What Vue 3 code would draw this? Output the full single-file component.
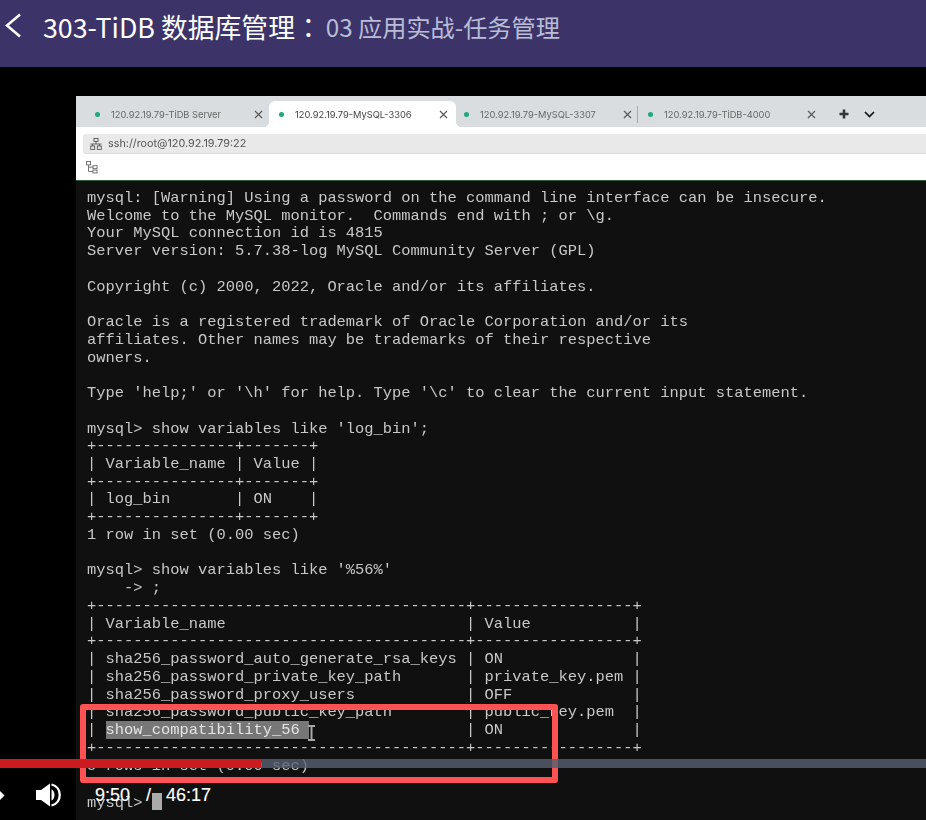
<script setup>
const tabs = [
  { label: '120.92.19.79-TiDB Server', cls: 't1' },
  { label: '120.92.19.79-MySQL-3306', cls: 't2 active' },
  { label: '120.92.19.79-MySQL-3307', cls: 't3' },
  { label: '120.92.19.79-TiDB-4000', cls: 't4' }
]
const before = `mysql: [Warning] Using a password on the command line interface can be insecure.
Welcome to the MySQL monitor.  Commands end with ; or \\g.
Your MySQL connection id is 4815
Server version: 5.7.38-log MySQL Community Server (GPL)

Copyright (c) 2000, 2022, Oracle and/or its affiliates.

Oracle is a registered trademark of Oracle Corporation and/or its
affiliates. Other names may be trademarks of their respective
owners.

Type 'help;' or '\\h' for help. Type '\\c' to clear the current input statement.

mysql> show variables like 'log_bin';
+---------------+-------+
| Variable_name | Value |
+---------------+-------+
| log_bin       | ON    |
+---------------+-------+
1 row in set (0.00 sec)

mysql> show variables like '%56%'
    -> ;
+----------------------------------------+-----------------+
| Variable_name                          | Value           |
+----------------------------------------+-----------------+
| sha256_password_auto_generate_rsa_keys | ON              |
| sha256_password_private_key_path       | private_key.pem |
| sha256_password_proxy_users            | OFF             |
| sha256_password_public_key_path        | public_key.pem  |
| `
const after = `                 | ON              |
+----------------------------------------+-----------------+
5 rows in set (0.00 sec)

mysql> `
</script>

<template>
  <div class="page">
    <header class="topbar">
      <svg class="back" width="20" height="28" viewBox="0 0 20 28">
        <path d="M17 2.5 L4 13.5 L17 24.5" fill="none" stroke="#fff" stroke-width="2.5" />
      </svg>
      <span class="title">303-TiDB 数据库管理<span class="colon">：</span></span>
      <span class="subtitle">03 应用实战-任务管理</span>
    </header>

    <main class="stage">
      <section class="screen">
        <nav class="tabs">
          <div v-for="t in tabs" :key="t.label" class="tab" :class="t.cls">
            <i class="dot"></i>
            <span class="tab-label">{{ t.label }}</span>
            <svg class="close" width="9" height="9" viewBox="0 0 9 9">
              <path d="M1 1 L8 8 M8 1 L1 8" stroke="#555" stroke-width="1.1" />
            </svg>
          </div>
          <div class="tab-actions">
            <svg width="10" height="10" viewBox="0 0 10 10"><path d="M5 .5 V9.5 M.5 5 H9.5" stroke="#333" stroke-width="2.6" /></svg>
            <svg width="11" height="7" viewBox="0 0 11 7"><path d="M1 1 L5.5 5.5 L10 1" fill="none" stroke="#111" stroke-width="1.7" /></svg>
          </div>
        </nav>
        <div class="address-wrap">
          <div class="address">
            <svg width="12" height="12" viewBox="0 0 12 12" fill="none" stroke="#555" stroke-width=".9">
              <rect x="4" y=".5" width="4" height="3" /><path d="M6 3.5 V6 M.5 6 H11.5 M2.5 6 V8 M9.5 6 V8" />
              <rect x=".7" y="8" width="4" height="3.4" /><rect x="7.3" y="8" width="4" height="3.4" />
            </svg>
            <span>ssh://root@120.92.19.79:22</span>
          </div>
        </div>
        <div class="tool">
          <svg width="12" height="13" viewBox="0 0 12 13" fill="none" stroke="#666" stroke-width=".9">
            <rect x=".5" y=".5" width="4" height="3.4" /><rect x="7" y="4.7" width="4" height="3" /><rect x="7" y="9" width="4" height="3" />
            <path d="M2.5 4 V10.5 H7 M2.5 6.2 H7" />
          </svg>
        </div>
        <pre class="term">{{ before }}<mark class="sel">show_compatibility_56 </mark><span class="caret"><svg width="9" height="16" viewBox="0 0 9 16"><path d="M1 1 H8 M1 15 H8 M4.5 1 V15" fill="none" stroke="#a8a8a8" stroke-width="2" /></svg></span>{{ after }}<i class="cursor"></i></pre>
      </section>

      <div class="highlight"></div>

      <div class="progress">
        <div class="played"></div>
      </div>

      <div class="controls">
        <svg class="play" width="5" height="9" viewBox="0 0 5 9"><path d="M0 0 L4.5 4.5 L0 9 Z" fill="#fff" /></svg>
        <svg class="volume" width="26" height="24" viewBox="0 0 26 24">
          <path d="M0 7 H5 L14 0.5 V23.5 L5 17 H0 Z" fill="#fff" />
          <path d="M15.5 6.5 C19.5 8 19.5 16 15.5 17.5 Z" fill="#fff" />
          <path d="M15.5 1.5 C26.5 4 26.5 20 15.5 22.5" fill="none" stroke="#fff" stroke-width="2.3" />
        </svg>
        <span class="time">9:50</span>
        <span class="sep">/</span>
        <span class="time total">46:17</span>
      </div>
    </main>
  </div>
</template>

<style>
html, body { margin: 0; background: #000; }
</style>

<style scoped>
.page {
  width: 926px;
  height: 820px;
  overflow: hidden;
  background: #000;
  display: flex;
  flex-direction: column;
}
.topbar {
  height: 67px;
  flex: none;
  box-sizing: border-box;
  background: #3c3469;
  display: flex;
  align-items: flex-start;
  padding: 12px 0 0 3px;
  font-family: "Noto Sans CJK SC", "Noto Sans", sans-serif;
}
.back { flex: none; margin-right: 20px; }
.title { color: #fff; font-size: 26.8px; line-height: 30px; white-space: nowrap; }
.colon { font-family: "Noto Sans CJK TC", sans-serif; }
.subtitle { color: #b9bdd6; font-size: 24.2px; line-height: 30px; margin-left: 4px; white-space: nowrap; }
.stage {
  flex: 1;
  position: relative;
  padding: 29px 0 0 76px;
}
.screen {
  width: 850px;
  height: 724px;
  background: #101010;
  display: flex;
  flex-direction: column;
  overflow: hidden;
  filter: blur(.3px);
}
.tabs {
  height: 31px;
  flex: none;
  background: #d9dde0;
  display: flex;
  align-items: stretch;
  padding: 5px 0 0 9px;
  box-sizing: border-box;
}
.tab {
  width: 184px;
  box-sizing: border-box;
  display: flex;
  align-items: center;
  padding: 1px 6.5px 0 10px;
  color: #666;
  font: 9.3px/1 "Inter", "Liberation Sans", sans-serif;
  position: relative;
}
.tab.t2 { width: 187px; padding-right: 8.5px; }
.tab.t3 { width: 182px; padding-left: 8px; }
.tab.active {
  background: #fff;
  border-radius: 6px 6px 0 0;
  color: #444;
}
.tab.active::before,
.tab.active::after {
  content: "";
  position: absolute;
  bottom: 0;
  width: 6px;
  height: 6px;
}
.tab.active::before {
  left: -6px;
  background: radial-gradient(circle at 0 0, transparent 6px, #fff 6.5px);
}
.tab.active::after {
  right: -6px;
  background: radial-gradient(circle at 100% 0, transparent 6px, #fff 6.5px);
}
.tab.t3::after {
  content: "";
  position: absolute;
  right: 0;
  top: 5px;
  height: 17px;
  width: 1px;
  background: #aaa;
}
.dot {
  width: 5px;
  height: 5px;
  border-radius: 50%;
  background: #21a77c;
  flex: none;
  margin-right: 11px;
}
.tab-label { flex: 1; white-space: nowrap; }
.close { flex: none; }
.tab-actions { display: flex; align-items: center; gap: 14.5px; padding-left: 17px; }
.address-wrap {
  height: 27px;
  flex: none;
  background: #fff;
  box-sizing: border-box;
  padding: 7px 0 0 7px;
}
.address {
  height: 20px;
  box-sizing: border-box;
  background: #e9e9e9;
  border-bottom: 1px solid #ddd;
  border-radius: 3px 0 0 3px;
  display: flex;
  align-items: center;
  gap: 6px;
  padding: 1px 0 0 7px;
  color: #555;
  font: 10.8px/1 "Inter", "Liberation Sans", sans-serif;
}
.tool {
  height: 27px;
  flex: none;
  background: #fff;
  box-sizing: border-box;
  padding: 6px 0 0 10px;
  border-bottom: 1px solid #2d5a3a;
}
.term {
  margin: 0;
  padding: 9px 0 0 11px;
  color: #c8c8c8;
  font: 15.42px/17.74px "Liberation Mono", "Courier New", monospace;
  white-space: pre;
}
.sel { background: #777; color: #e4e4e4; }
.caret {
  display: inline-block;
  width: 0;
  position: relative;
}
.caret svg { position: absolute; left: -2px; top: -9px; }
.cursor {
  display: inline-block;
  width: 10px;
  height: 17px;
  background: #aaa;
  vertical-align: -3px;
}
.highlight {
  position: absolute;
  left: 80px;
  top: 637px;
  width: 478px;
  height: 79px;
  box-sizing: border-box;
  border: 6px solid #ff5252;
  border-radius: 3px;
}
.progress {
  position: absolute;
  left: 0;
  right: 0;
  top: 692px;
  height: 9px;
  background: rgba(85, 96, 111, .8);
}
.played { width: 261px; height: 100%; background: #cc1a21; }
.controls {
  position: absolute;
  left: 0;
  top: 708px;
  height: 40px;
  width: 300px;
  color: #fff;
  font: 18px/1 "Liberation Sans", Arial, sans-serif;
  -webkit-text-stroke: .15px #fff;
}
.play { position: absolute; left: 0; top: 15.5px; }
.volume { position: absolute; left: 36px; top: 8px; }
.time { position: absolute; left: 95px; top: 11px; }
.sep { position: absolute; left: 146px; top: 11px; }
.total { left: 166px; }
</style>
